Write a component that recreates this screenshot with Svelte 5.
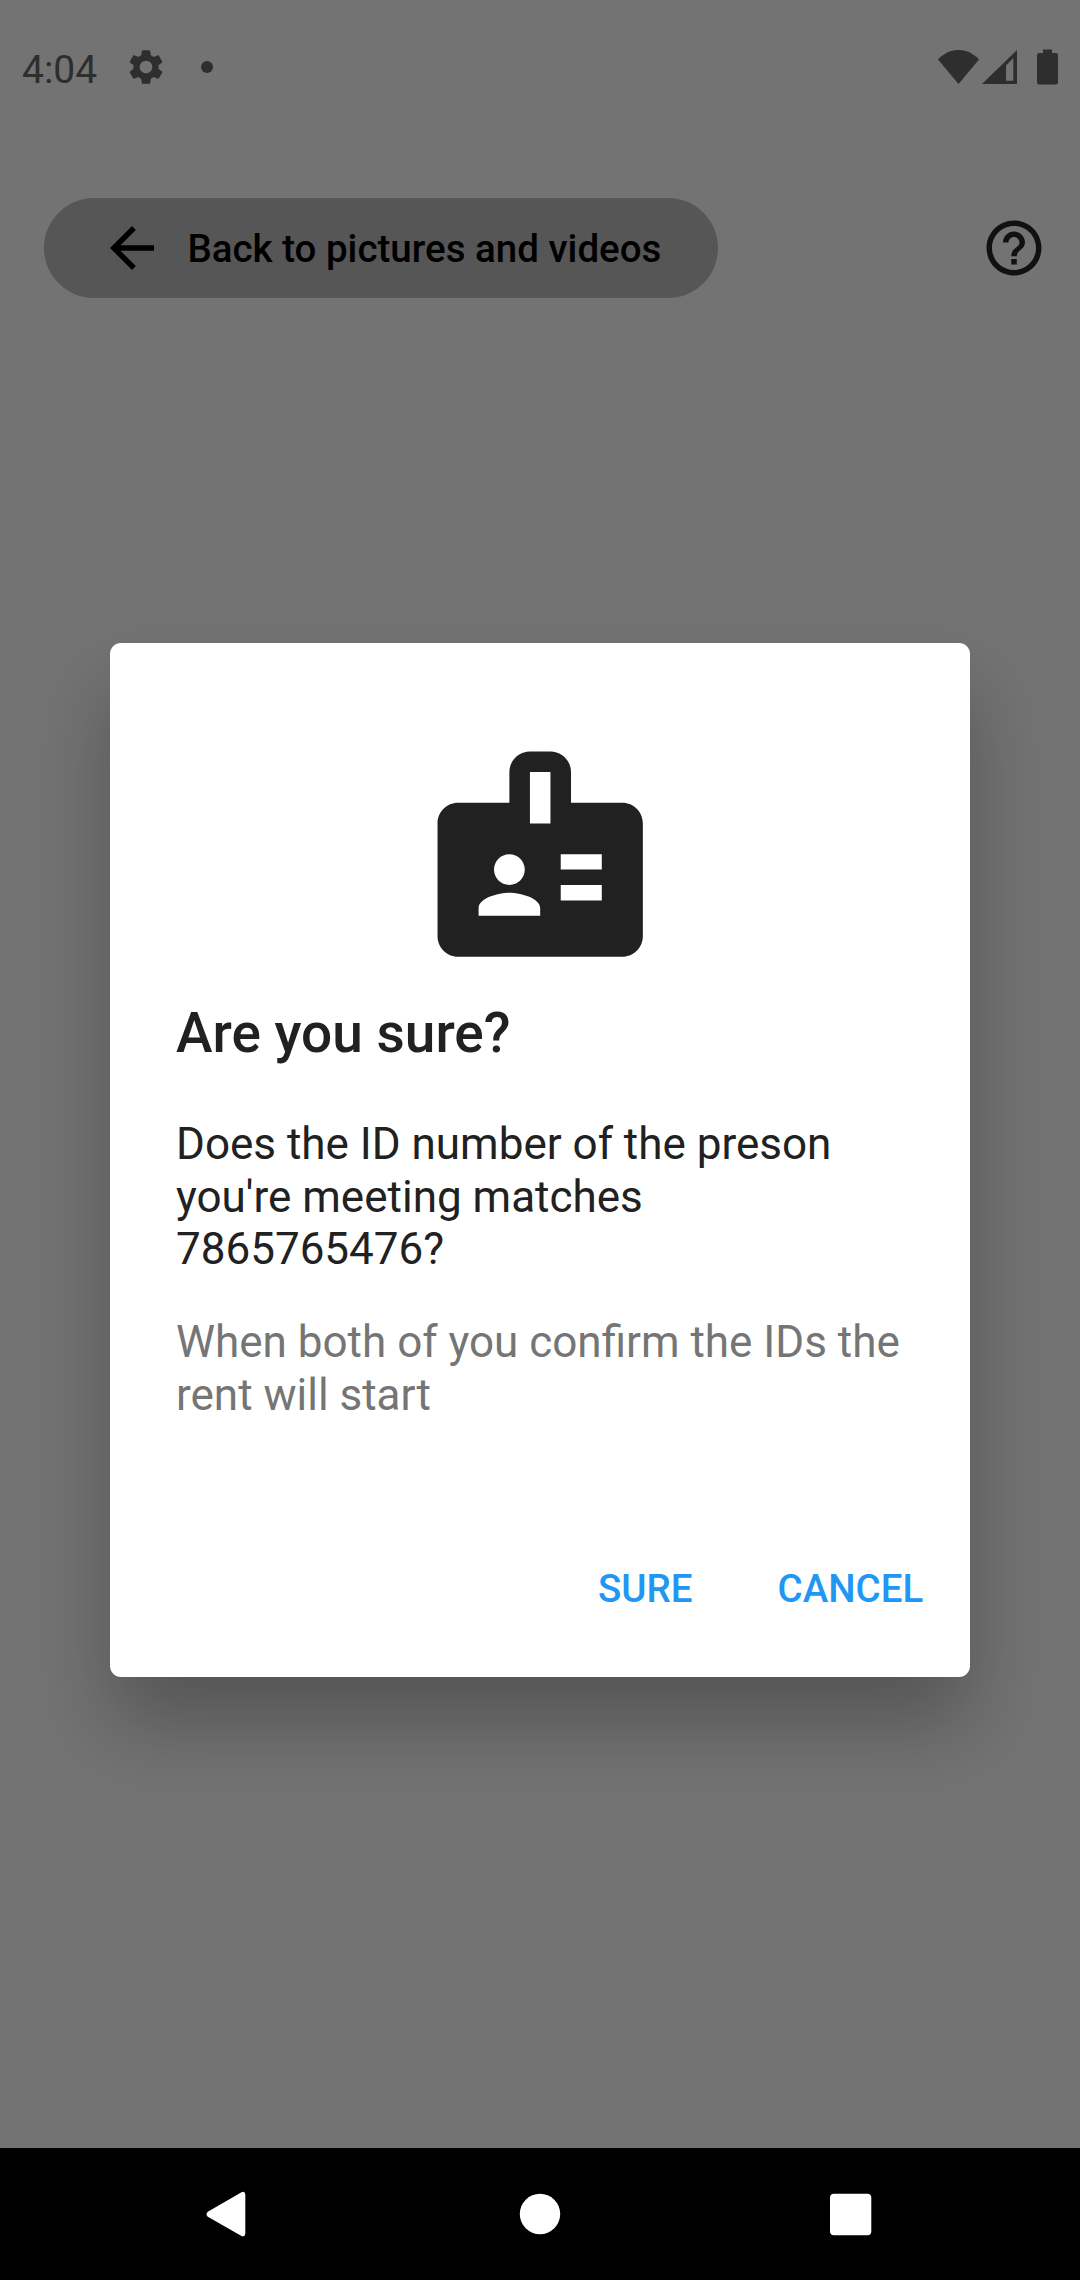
<script>
  let open = $state(true);
  const idNumber = '7865765476';
</script>

<div class="screen">
  <header class="status">
    <span class="time">4:04</span>
    <svg class="gear" viewBox="0 0 24 24"><path d="M19.14 12.94c.04-.3.06-.61.06-.94 0-.32-.02-.64-.07-.94l2.03-1.58c.18-.14.23-.41.12-.61l-1.92-3.32c-.12-.22-.37-.29-.59-.22l-2.39.96c-.5-.38-1.03-.7-1.62-.94l-.36-2.54c-.04-.24-.24-.41-.48-.41h-3.84c-.24 0-.43.17-.47.41l-.36 2.54c-.59.24-1.13.57-1.62.94l-2.39-.96c-.22-.08-.47 0-.59.22L2.74 8.87c-.12.21-.08.47.12.61l2.03 1.58c-.05.3-.09.63-.09.94s.02.64.07.94l-2.03 1.58c-.18.14-.23.41-.12.61l1.92 3.32c.12.22.37.29.59.22l2.39-.96c.5.38 1.03.7 1.62.94l.36 2.54c.05.24.24.41.48.41h3.84c.24 0 .44-.17.47-.41l.36-2.54c.59-.24 1.13-.56 1.62-.94l2.39.96c.22.08.47 0 .59-.22l1.92-3.32c.12-.22.07-.47-.12-.61l-2.01-1.58zM12 15.6c-1.98 0-3.6-1.62-3.6-3.6s1.62-3.6 3.6-3.6 3.6 1.62 3.6 3.6-1.62 3.6-3.6 3.6z" /></svg>
    <span class="dot"></span>
    <div class="system">
      <svg class="wifi" viewBox="0 0 41 34"><path d="M0 9.5C12-3.2 29-3.2 41 9.5L20.5 34z" /></svg>
      <svg class="signal" viewBox="0 0 35 34"><path fill-rule="evenodd" d="M35 0V34H0zM31.3 8L24 15.500V30.800H31.300z" /></svg>
      <svg class="battery" viewBox="0 0 21 36"><path d="M6 .5h9V4h4a2 2 0 0 1 2 2v27.500a2 2 0 0 1-2 2H2a2 2 0 0 1-2-2V6a2 2 0 0 1 2-2h4z" /></svg>
    </div>
  </header>

  <nav class="toolbar">
    <button class="back">
      <svg viewBox="0 0 24 24"><path d="M20 11H7.830l5.590-5.590L12 4l-8 8 8 8 1.410-1.410L7.830 13H20v-2z" /></svg>
      <span>Back to pictures and videos</span>
    </button>
    <button class="help" aria-label="Help">
      <svg viewBox="0 0 24 24"><path d="M11 18h2v-2h-2v2zm1-16C6.480 2 2 6.480 2 12s4.480 10 10 10 10-4.480 10-10S17.520 2 12 2zm0 18c-4.410 0-8-3.590-8-8s3.590-8 8-8 8 3.590 8 8-3.590 8-8 8zm0-14c-2.210 0-4 1.790-4 4h2c0-1.100.9-2 2-2s2 .9 2 2c0 2-3 1.750-3 5h2c0-2.250 3-2.500 3-5 0-2.210-1.790-4-4-4z" /></svg>
    </button>
  </nav>

  <main>
    {#if open}
      <div class="dialog" role="dialog" aria-labelledby="title">
        <svg class="badge" viewBox="0 0 24 24"><path fill-rule="evenodd" d="M20 7h-5V4c0-1.100-.9-2-2-2h-2c-1.100 0-2 .9-2 2v3H4c-1.100 0-2 .9-2 2v11c0 1.100.9 2 2 2h16c1.100 0 2-.9 2-2V9c0-1.100-.9-2-2-2zM9 12c.83 0 1.500.67 1.500 1.500S9.830 15 9 15s-1.500-.67-1.500-1.500S8.170 12 9 12zm3 6H6v-.75c0-1 2-1.500 3-1.500s3 .5 3 1.500V18zm1-9h-2V4h2v5zm5 7.500h-4V15h4v1.500zm0-3h-4V12h4v1.500z" /></svg>
        <h1 id="title">Are you sure?</h1>
        <p>Does the ID number of the preson you're meeting matches {idNumber}?</p>
        <p class="note">When both of you confirm the IDs the rent will start</p>
        <div class="actions">
          <button onclick={() => (open = false)}>SURE</button>
          <button onclick={() => (open = false)}>CANCEL</button>
        </div>
      </div>
    {/if}
  </main>

  <footer>
    <svg viewBox="0 0 48 48"><path d="M4.800 21.700L38.500 2.300Q42 .7 42.300 4.500V43.500Q42 47.300 38.500 45.900L4.800 26.800Q2.200 24.200 4.800 21.700z" /></svg>
    <svg viewBox="0 0 48 48"><circle cx="25" cy="24" r="20.200" /></svg>
    <svg viewBox="0 0 48 48"><rect x="3" y="3.700" width="41.300" height="41.500" rx="4" /></svg>
  </footer>
</div>

<style>
  :global(body) { margin: 0; }
  .screen {
    width: 1080px;
    height: 2280px;
    display: flex;
    flex-direction: column;
    overflow: hidden;
    background: #737373;
    font-family: Roboto, sans-serif;
  }
  svg { display: block; fill: currentColor; flex: none; }
  button {
    border: 0;
    padding: 0;
    margin: 0;
    background: none;
    font: 500 38.5px/45px Roboto, sans-serif;
    color: inherit;
    white-space: nowrap;
  }
  .status {
    height: 134px;
    box-sizing: border-box;
    padding: 0 22px;
    display: flex;
    align-items: center;
    color: #2e2e2e;
  }
  .time { width: 103px; font-size: 39px; line-height: 46px; padding-top: 5px; }
  .gear { width: 42px; height: 42px; }
  .dot { width: 12px; height: 12px; margin-left: 34px; border-radius: 50%; background: currentColor; }
  .system { display: flex; align-items: center; margin-left: auto; }
  .wifi { width: 41px; height: 34px; margin-right: 3px; }
  .signal { width: 35px; height: 34px; margin-right: 20px; }
  .battery { width: 21px; height: 36px; }
  .toolbar {
    height: 228px;
    box-sizing: border-box;
    padding: 64px 33px 0 44px;
    display: flex;
    justify-content: space-between;
    align-items: flex-start;
  }
  .back {
    width: 674px;
    height: 99.500px;
    box-sizing: border-box;
    padding-left: 55px;
    display: flex;
    align-items: center;
    gap: 22.400px;
    border-radius: 50px;
    background: #565656;
    color: #000;
  }
  .back span { padding-top: 2px; }
  .back svg, .help svg { width: 66px; height: 66px; }
  .help { padding-top: 17px; color: #111; }
  main {
    flex: 1;
    display: flex;
    justify-content: center;
    align-items: flex-start;
    padding-top: 281px;
  }
  .dialog {
    width: 860px;
    height: 1034px;
    box-sizing: border-box;
    padding: 88px 0 0 66px;
    display: flex;
    flex-direction: column;
    border-radius: 11px;
    background: #fff;
    color: #212121;
    box-shadow: 0 48px 80px rgba(0, 0, 0, 0.26);
  }
  .badge { width: 246.4px; height: 246.4px; margin: 0 0 0 240.8px; }
  h1 { margin: 23.800px 0 53px; font-size: 55px; font-weight: 500; line-height: 64px; }
  p { margin: 0 66px 39.700px 0; font-size: 44px; line-height: 52.6px; }
  .note { color: #757575; margin-bottom: 0; line-height: 53.2px; }
  .actions {
    display: flex;
    justify-content: flex-end;
    gap: 85px;
    padding: 143.800px 46.800px 0 0;
    color: #2196f3;
  }
  footer {
    height: 132px;
    display: flex;
    align-items: center;
    justify-content: space-between;
    box-sizing: border-box;
    padding: 0 205px 0 203px;
    background: #000;
    color: #fff;
  }
  footer svg { width: 48px; height: 48px; }
</style>
